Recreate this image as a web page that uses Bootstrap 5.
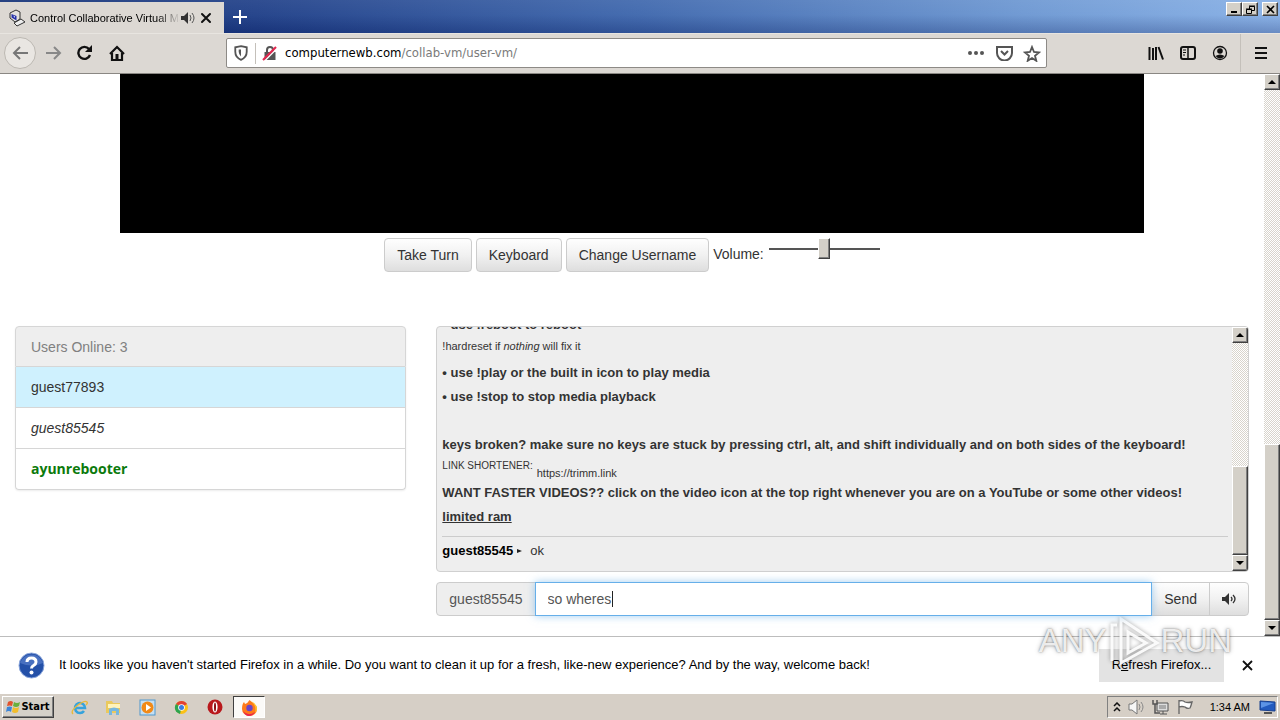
<!DOCTYPE html>
<html lang="en">
<head>
<meta charset="utf-8">
<meta name="viewport" content="width=device-width, initial-scale=1">
<title>Control Collaborative Virtual Machines</title>
<link href="https://cdn.jsdelivr.net/npm/bootstrap@5.3.0/dist/css/bootstrap.min.css" rel="stylesheet">
<style>
:root{--face:#d4d0c8;--chrome:#dcd8d3}
body{font-family:"Liberation Sans",Arial,sans-serif;font-size:14px;line-height:20px;color:#333;background:#fff}
button{font-family:inherit}
svg{display:block;flex:none}
.ui{font-size:13px;color:#000}
/* window frame and tabs */
.titlebar{height:33px;background:linear-gradient(180deg,rgba(255,255,255,.08),rgba(255,255,255,.04) 45%,rgba(0,10,70,.22)),linear-gradient(90deg,#143277,#1f3f88 20%,#3e67ad 50%,#6c97d2 80%,#87b0e6)}
.tab{width:224px;height:31px;background:var(--chrome);font-size:11px;color:#000;padding-left:8px}
.tab-title{width:150px;margin-left:4px;overflow:hidden;white-space:nowrap;-webkit-mask-image:linear-gradient(90deg,#000 85%,transparent)}
.plain{background:none;border:0;padding:0;color:inherit;display:flex;align-items:center;justify-content:center}
.window-buttons{padding:2px 2px 0 0}
.win{width:16px;height:14px}
.raised{background:var(--face);border:1px solid;border-color:#fff #404040 #404040 #fff;box-shadow:inset -1px -1px #808080;padding:0;display:flex;align-items:center;justify-content:center;color:#000;border-radius:0}
/* toolbar */
.toolbar{height:41px;padding:0 3px 1px 4px;background:var(--chrome);border-bottom:1px solid #8a8783;border-top:1px solid #e8e5e0}
.tool{width:32px;height:32px}
.back{background:#e9e6e2;border:1px solid #bcb8b2;border-radius:50%;margin-right:1px}
.stretch{flex:0 1 93px}
.url{height:30px;background:#fff;border:1px solid #8d8a86;border-radius:2px;color:#5c5c5c}
.url-cell{width:28px;height:28px}
.url-text{padding-left:1px;font-family:"DejaVu Sans Condensed","DejaVu Sans",sans-serif;font-size:13px;color:#7a7a7a;outline:0}
.url-text span{color:#000}
.vline{width:1px;background:#c4c0ba}
/* scrollbars */
.bar{width:16px;background:repeating-conic-gradient(#d8d4cc 0 25%,#fff 0 50%) 0 0/2px 2px}
.bar .raised{width:16px}
.bar .arrow{height:16px;flex:none}
.gap-page{flex:355}.thumb-page{flex:175}
.gap-chat{flex:124}.thumb-chat{flex:88}
/* page */
.screen{width:1024px;max-width:100%;height:159px;background:#000}
.controls{margin-top:5px}
.controls label{padding-top:6px}
.btn-soft{--bs-btn-color:#333;--bs-btn-font-size:14px;--bs-btn-line-height:20px;--bs-btn-padding-x:12px;--bs-btn-padding-y:6px;--bs-btn-border-color:#ccc;--bs-btn-border-radius:4px;background:linear-gradient(#fefefe,#f1f1f1 50%,#dedede)}
.volume{-webkit-appearance:none;appearance:none;width:111px;height:21px;margin-left:1px;background:linear-gradient(#555,#555) center/100% 2px no-repeat}
.volume::-webkit-slider-thumb{-webkit-appearance:none;width:12px;height:21px;background:var(--face);border:1px solid;border-color:#fff #404040 #404040 #fff;box-shadow:inset -1px -1px #808080}
.page-body{padding:0 15px}
.columns{--bs-gutter-x:30px;margin-top:54px}
.users{--bs-list-group-border-color:#d6d6d6;--bs-list-group-border-radius:4px;--bs-list-group-item-padding-x:15px;--bs-list-group-item-padding-y:10px;--bs-list-group-color:#333;box-shadow:0 1px 2px rgba(0,0,0,.08)}
.users .head{background:#eee;color:#808080;padding-bottom:9px}
.users .turn{background:#cff1fe}
.users .bot{color:#0b7a0b;font-family:"Open Sans",sans-serif;font-weight:700}
.chat{height:246px;background:#eee;border:1px solid #d0d0d0;border-radius:4px}
.log{padding:0 4px 8px 5px;font-size:13px;line-height:24px}
.log>div{flex-shrink:0}
.log .tiny{font-size:11px;line-height:18px;height:24px}
.log .sub-row{font-size:10px;line-height:18px;height:24px}
.log .low{padding-top:7px;font-size:11px}
.log .said{border-top:1px solid #ccc;margin-top:7px;padding-top:2px}
.log .name{color:#000;font-weight:700}
.say{margin-top:10px}
.say .input-group-text{background:#eee;border-color:#ccc;color:#555;font-size:14px;line-height:20px;padding:6px 12px;border-radius:4px}
.say .field{flex:1;min-width:0;border:1px solid #66afe9;box-shadow:0 0 8px rgba(102,175,233,.6);z-index:6}
.say .form-control{font-size:14px;line-height:20px;padding:6px 12px;border:0;border-radius:0;color:#555;background:#fff;caret-color:transparent}
.caret{left:76px;top:8px;width:1px;height:16px;background:#222;z-index:7}
/* notification and taskbar */
.notice{height:57px;border-top:1px solid #bdbdbd;background:#fff;padding:0 27px 0 18px;gap:14px}
.btn-flat{width:125px;height:33px;background:#e3e3e3;border:0;color:#000;font-size:13px}
.brand{right:48px;bottom:26px;pointer-events:none;color:rgba(255,255,255,.85);font:400 33px/38px "Liberation Sans",sans-serif;text-shadow:0 0 2px rgba(0,0,0,.45),0 0 5px rgba(0,0,0,.3)}
.brand svg{filter:drop-shadow(0 0 2px rgba(0,0,0,.4))}
.taskbar{height:27px;background:#d6cfc6;border-top:1px solid #fff;box-shadow:0 -1px #d0ccc5;padding:2px 2px}
.start{width:52px;height:22px;margin-right:9px;font:700 11px/16px "DejaVu Sans Condensed","DejaVu Sans",sans-serif}
.launchers{gap:2px}
.launch{width:32px;height:22px}
.sunken{border:1px solid;border-color:#808080 #fff #fff #808080}
.launch.sunken{background:#fbfaf8;border-color:#404040 #fff #fff #404040}
.tray{height:22px;font-size:11px;color:#000;padding:0 1px 0 5px}
.tray .plain{width:24px;height:20px}
.tray span{margin:0 9px 0 13px}
</style>
</head>
<body class="d-flex flex-column min-vh-100">

<header>
  <div class="titlebar d-flex align-items-end">
    <div class="tab d-flex align-items-center">
      <svg width="18" height="18" viewBox="0 0 18 18"><path d="M2 4l6-3 4 2v7l-5 3-5-4z" fill="#e4e2dd" stroke="#333"/><path d="M3.500 5l5 2v4.500l-5-3z" fill="#2430a8"/><path d="M6 14l7-4 4 3-8 4z" fill="#eee" stroke="#333"/><path d="M5 6.500l2 1v1.500z" fill="#fff"/></svg>
      <span class="tab-title">Control Collaborative Virtual Machines</span>
      <button class="plain" aria-label="Mute tab"><svg width="16" height="14" viewBox="0 0 16 14"><path d="M1 5h3l4-4v12L4 9H1z" fill="#333"/><path d="M10 4q2 3 0 6M12 2q4 5 0 10" fill="none" stroke="#555"/></svg></button>
      <button class="plain ms-1" aria-label="Close tab"><svg width="12" height="12" viewBox="0 0 12 12"><path d="M2 2l8 8M10 2l-8 8" stroke="#111" stroke-width="2" stroke-linecap="round"/></svg></button>
    </div>
    <button class="plain align-self-center ms-2" aria-label="New tab"><svg width="16" height="14" viewBox="0 0 16 14"><path d="M8 0v14M1 7h14" stroke="#fff" stroke-width="2"/></svg></button>
    <div class="window-buttons d-flex align-self-start ms-auto">
      <button class="raised win" aria-label="Minimize"><svg width="9" height="9"><path d="M1 7h6" stroke="#000" stroke-width="2"/></svg></button>
      <button class="raised win" aria-label="Restore"><svg width="9" height="9"><path d="M3.500 1.500h5v4h-5z" fill="#d4d0c8" stroke="#000"/><path d="M.5 4.500h5v4h-5z" fill="#d4d0c8" stroke="#000"/><path d="M3 1h6M0 4h6" stroke="#000"/></svg></button>
      <button class="raised win ms-1" aria-label="Close"><svg width="9" height="9"><path d="M1 1l7 7M8 1l-7 7" stroke="#000" stroke-width="1.600"/></svg></button>
    </div>
  </div>
  <nav class="toolbar d-flex align-items-center" aria-label="Browser">
    <button class="plain tool back" aria-label="Back"><svg width="18" height="16" viewBox="0 0 18 16"><path d="M9 2L3 8l6 6M3 8h14" fill="none" stroke="#777" stroke-width="2"/></svg></button>
    <button class="plain tool" aria-label="Forward"><svg width="18" height="16" viewBox="0 0 18 16"><path d="M10 2l6 6-6 6M16 8H2" fill="none" stroke="#888" stroke-width="2"/></svg></button>
    <button class="plain tool" aria-label="Reload"><svg width="16" height="16" viewBox="0 0 16 16"><path d="M13 10A6 6 0 1 1 12 4" fill="none" stroke="#111" stroke-width="2.400"/><path d="M15 0v7H8z" fill="#111"/></svg></button>
    <button class="plain tool" aria-label="Home"><svg width="16" height="16" viewBox="0 0 16 16"><path d="M1 9l7-7 7 7M3 8v7h10V8" fill="none" stroke="#111" stroke-width="2.200"/><path d="M6.500 9h3v6h-3z" fill="#111"/></svg></button>
    <span class="stretch"></span>
    <div class="url flex-grow-1 d-flex align-items-center">
      <button class="plain url-cell" aria-label="Tracking protection"><svg width="16" height="16" viewBox="0 0 14 14"><path d="M7 1l5 1v4q0 5-5 7-5-2-5-7V2z" fill="none" stroke="#555" stroke-width="1.600"/><path d="M7 4v6q-2-2-2-4V4z" fill="#555"/></svg></button>
      <span class="vline h-75"></span>
      <button class="plain url-cell" aria-label="Connection is not secure"><svg width="16" height="16" viewBox="0 0 16 16"><path d="M2.500 7h11v8h-11z" fill="#555"/><path d="M5 8V5a3 3 0 0 1 6 0v3" fill="none" stroke="#555" stroke-width="2"/><path d="M2 16.500L15.500 3" stroke="#fff" stroke-width="1.500"/><path d="M1 15L14 2" stroke="#e22850" stroke-width="2.200"/></svg></button>
      <div class="url-text flex-grow-1" role="textbox" aria-label="Address" contenteditable="true" spellcheck="false"><span>computernewb.com</span>/collab-vm/user-vm/</div>
      <button class="plain url-cell" aria-label="Page actions"><svg width="16" height="4"><circle cx="2" cy="2" r="2" fill="#555"/><circle cx="8" cy="2" r="2" fill="#555"/><circle cx="14" cy="2" r="2" fill="#555"/></svg></button>
      <button class="plain url-cell" aria-label="Save to Pocket"><svg width="17" height="15" viewBox="0 0 17 15"><path d="M1 1h15v6a7 7 0 0 1-15 0z" fill="none" stroke="#555" stroke-width="2"/><path d="M5 5l3.500 3.500L12 5" fill="none" stroke="#555" stroke-width="2"/></svg></button>
      <button class="plain url-cell" aria-label="Bookmark"><svg width="18" height="17" viewBox="0 0 18 17"><path d="M9 2l2 5 5 .5-4 3.300 1.300 5L9 13l-4.300 2.800 1.300-5-4-3.300L7 7z" fill="none" stroke="#555" stroke-width="1.800"/></svg></button>
    </div>
    <span class="stretch"></span>
    <button class="plain tool" aria-label="Library"><svg width="16" height="14" viewBox="0 0 16 14"><path d="M1.500 1v13M5 2v12M8 1v13M10.500 1L15 13.500" stroke="#111" stroke-width="2"/></svg></button>
    <button class="plain tool" aria-label="Sidebar"><svg width="16" height="14" viewBox="0 0 16 14"><rect x="1" y="1" width="14" height="12" rx="2" fill="none" stroke="#111" stroke-width="2"/><path d="M8 1v12" stroke="#111" stroke-width="1.500"/><path d="M3 4h3M3 6.500h3M3 9h2" stroke="#111"/></svg></button>
    <button class="plain tool" aria-label="Account"><svg width="16" height="16" viewBox="0 0 16 16"><circle cx="8" cy="8" r="6.500" fill="none" stroke="#111" stroke-width="1.300"/><circle cx="8" cy="6" r="2.800" fill="#111"/><path d="M3.500 11q4.500-3 9 0-4.500 5-9 0z" fill="#111"/></svg></button>
    <span class="vline align-self-stretch mx-1"></span>
    <button class="plain tool" aria-label="Menu"><svg width="12" height="12"><path d="M0 1h12M0 6h12M0 11h12" stroke="#111" stroke-width="2"/></svg></button>
  </nav>
</header>

<div class="d-flex flex-grow-1">
  <main class="flex-grow-1">
    <div class="screen mx-auto"></div>
    <div class="controls d-flex justify-content-center gap-1">
      <button class="btn btn-soft">Take Turn</button>
      <button class="btn btn-soft">Keyboard</button>
      <button class="btn btn-soft">Change Username</button>
      <label for="volume">Volume:</label>
      <input type="range" id="volume" class="volume" min="0" max="100" value="50">
    </div>
    <div class="page-body">
      <div class="row columns">
        <section class="col-4">
          <ul class="list-group users">
            <li class="list-group-item head">Users Online: 3</li>
            <li class="list-group-item turn">guest77893</li>
            <li class="list-group-item fst-italic">guest85545</li>
            <li class="list-group-item bot">ayunrebooter</li>
          </ul>
        </section>
        <section class="col-8">
          <div class="chat d-flex overflow-hidden">
            <div class="log flex-grow-1 d-flex flex-column justify-content-end overflow-hidden">
              <div class="fw-bold">• use !reboot to reboot</div>
              <div class="tiny">!hardreset if <i>nothing</i> will fix it</div>
              <div class="fw-bold">• use !play or the built in icon to play media</div>
              <div class="fw-bold">• use !stop to stop media playback</div>
              <div>&nbsp;</div>
              <div class="fw-bold">keys broken? make sure no keys are stuck by pressing ctrl, alt, and shift individually and on both sides of the keyboard!</div>
              <div class="sub-row d-flex gap-1"><span>LINK SHORTENER:</span><span class="low">https://trimm.link</span></div>
              <div class="fw-bold">WANT FASTER VIDEOS?? click on the video icon at the top right whenever you are on a YouTube or some other videos!</div>
              <div class="fw-bold text-decoration-underline">limited ram</div>
              <div class="said d-flex align-items-center"><span class="name">guest85545</span><svg class="mx-1" width="5" height="6"><path d="M0 1l5 2-5 2z" fill="#222"/></svg><span class="ms-1">ok</span></div>
            </div>
            <div class="bar d-flex flex-column flex-shrink-0">
              <button class="raised arrow" aria-label="Scroll chat up"><svg width="8" height="4"><path d="M0 4l4-4 4 4z"/></svg></button>
              <span class="gap-chat"></span><span class="raised thumb-chat"></span>
              <button class="raised arrow" aria-label="Scroll chat down"><svg width="8" height="4"><path d="M0 0l4 4 4-4z"/></svg></button>
            </div>
          </div>
          <div class="input-group say">
            <label class="input-group-text" for="message">guest85545</label>
            <div class="field position-relative">
              <input id="message" class="form-control" type="text" value="so wheres">
              <span class="caret position-absolute"></span>
            </div>
            <button class="btn btn-soft">Send</button>
            <button class="btn btn-soft" aria-label="Sound"><svg width="14" height="12" viewBox="0 0 14 12"><path d="M0 4h3l4-4v12L3 8H0z" fill="#333"/><path d="M9 4q2 2 0 4M11 2q4 4 0 8" fill="none" stroke="#333" stroke-width="1.300"/></svg></button>
          </div>
        </section>
      </div>
    </div>
  </main>
  <div class="bar d-flex flex-column flex-shrink-0">
    <button class="raised arrow" aria-label="Scroll page up"><svg width="8" height="4"><path d="M0 4l4-4 4 4z"/></svg></button>
    <span class="gap-page"></span><span class="raised thumb-page"></span>
    <button class="raised arrow" aria-label="Scroll page down"><svg width="8" height="4"><path d="M0 0l4 4 4-4z"/></svg></button>
  </div>
</div>

<footer>
  <div class="notice ui d-flex align-items-center position-relative">
    <svg width="27" height="27" viewBox="0 0 27 27"><circle cx="13.500" cy="13.500" r="12.500" fill="#2450a8" stroke="#8aa6dc"/><path d="M2 11a12 12 0 0 1 23 0q-11 5-23 0z" fill="#6b90d8" opacity=".5"/><path d="M9 10q0-4 4.500-4t4.500 4q0 2-2.500 3.500-2 1-2 3" fill="none" stroke="#fff" stroke-width="3"/><circle cx="13.500" cy="20.500" r="2" fill="#fff"/></svg>
    <span class="flex-grow-1">It looks like you haven't started Firefox in a while. Do you want to clean it up for a fresh, like-new experience? And by the way, welcome back!</span>
    <button class="btn-flat">R<u>e</u>fresh Firefox...</button>
    <button class="plain ms-1" aria-label="Dismiss"><svg width="11" height="11"><path d="M1 1l9 9M10 1l-9 9" stroke="#111" stroke-width="1.800"/></svg></button>
    <div class="brand position-absolute d-flex align-items-center" aria-hidden="true"><span>ANY</span><svg width="54" height="52" viewBox="0 0 54 52" fill="none" stroke="#fff" stroke-opacity=".9" stroke-width="3"><path d="M5 46V10h5M14 4l36 24-36 20zM21 17l18 11-18 10z"/></svg><span>RUN</span></div>
  </div>
  <div class="taskbar d-flex align-items-center">
    <button class="raised start"><svg width="15" height="14" viewBox="0 0 15 14"><path d="M2 2q3-2 5 0L6 6Q4 5 1 6z" fill="#e2532d"/><path d="M8 2q3 2 6 0l-1 4q-3 2-6 0z" fill="#69b03c"/><path d="M1 7q3-1 5 0l-1 5q-2-2-5 0z" fill="#3c85d8"/><path d="M7 7q3 2 6 0l-1 5q-3 2-6 0z" fill="#f2bd2c"/></svg>Start</button>
    <div class="launchers d-flex">
    <button class="plain launch" aria-label="Internet Explorer"><svg width="17" height="17" viewBox="0 0 17 17"><path d="M13 12a5 5 0 1 1 1-3H4.500" fill="none" stroke="#36a3dc" stroke-width="2.600"/><path d="M2 15q-3-3 5-9 7-5 9-3 1 1-1 3" fill="none" stroke="#e8b93c" stroke-width="1.400"/></svg></button>
    <button class="plain launch" aria-label="Explorer"><svg width="17" height="17" viewBox="0 0 17 17"><path d="M1 2h6l1 2h7v10H1z" fill="#eac95c"/><path d="M3 5h12v4H3z" fill="#fff3ba"/><path d="M4 16V10q5-3 10 0v6h-3v-4H7v4z" fill="#77b7de"/></svg></button>
    <button class="plain launch" aria-label="Media Player"><svg width="17" height="17" viewBox="0 0 17 17"><rect x="1" y="1" width="15" height="15" fill="#c6dff2" stroke="#4e98ce"/><circle cx="8.500" cy="8.500" r="6" fill="#f18a18"/><path d="M7 5l5 3.500L7 12z" fill="#fff"/></svg></button>
    <button class="plain launch" aria-label="Chrome"><svg width="15" height="15" viewBox="0 0 15 15"><circle cx="7.500" cy="7.500" r="6.500" fill="#fbc116"/><path d="M7.500 7.500L2 4a6.500 6.500 0 0 1 11 0z" fill="#e34133"/><path d="M7.500 7.500L2 4a6.500 6.500 0 0 0 4 10z" fill="#2da44f"/><circle cx="7.500" cy="7.500" r="3.300" fill="#fff"/><circle cx="7.500" cy="7.500" r="2.500" fill="#3c7de0"/></svg></button>
    <button class="plain launch" aria-label="Opera"><svg width="16" height="16" viewBox="0 0 16 16"><circle cx="8" cy="8" r="7.500" fill="#b9181c"/><ellipse cx="8" cy="8" rx="2.600" ry="5.500" fill="#fff"/><ellipse cx="8" cy="8" rx="1" ry="4.500" fill="#8a0c10"/></svg></button>
    <button class="plain launch sunken" aria-label="Firefox"><svg width="17" height="17" viewBox="0 0 17 17"><path d="M8.500 1q2 2 4 3 4 3 3.500 6a7.500 7 0 0 1-15 0Q1 5 3 3l1 2q3-1 4.500-4z" fill="#ff7a1a"/><path d="M10 2q6 3 6 8a7 7 0 0 1-2 4q2-7-4-12z" fill="#ffc928"/><path d="M2 12q5 6 12 1-2 4-6 4t-6-5z" fill="#e8254f"/><circle cx="8.500" cy="9" r="3.200" fill="#6a45c8"/></svg></button>
    </div>
    <div class="tray sunken d-flex align-items-center ms-auto">
      <button class="plain w-auto" aria-label="Show hidden icons"><svg width="8" height="10"><path d="M1 4l3-3 3 3M1 9l3-3 3 3" fill="none" stroke="#111" stroke-width="1.500"/></svg></button>
      <button class="plain ms-1" aria-label="Speakers"><svg width="17" height="16" viewBox="0 0 17 16"><path d="M1 5h3l5-4v14l-5-4H1z" fill="#f6f6f6" stroke="#777"/><path d="M11 5q2 3 0 6M13 3q4 5 0 10" fill="none" stroke="#888"/></svg></button>
      <button class="plain" aria-label="Network"><svg width="17" height="16" viewBox="0 0 17 16"><path d="M5 4h11v8H5zM8 15h7M11 12v3" fill="#ddd" stroke="#555"/><path d="M1 1v4h4V1M3 5v9h5" fill="none" stroke="#555" stroke-width="1.500"/><path d="M7 6h7v4H7z" fill="#aaa"/></svg></button>
      <button class="plain" aria-label="Action Center"><svg width="16" height="16" viewBox="0 0 16 16"><path d="M2 15V1M2 2q4-1 6 1 3 1 7 0-1 4-2 6-3 1-5-1-3-1-6 0z" fill="#fff" stroke="#666" stroke-width="1.300"/></svg></button>
      <span>1:34 AM</span>
      <svg width="17" height="15" viewBox="0 0 17 15"><path d="M1 1l15 1v9l-15-1z" fill="#235bbf" stroke="#19408e"/><path d="M2 2l13 1-13 5z" fill="#5d94e6"/><path d="M5 13h8" stroke="#555" stroke-width="2"/></svg>
    </div>
  </div>
</footer>
<script src="https://cdn.jsdelivr.net/npm/bootstrap@5.3.0/dist/js/bootstrap.bundle.min.js"></script>
</body>
</html>
